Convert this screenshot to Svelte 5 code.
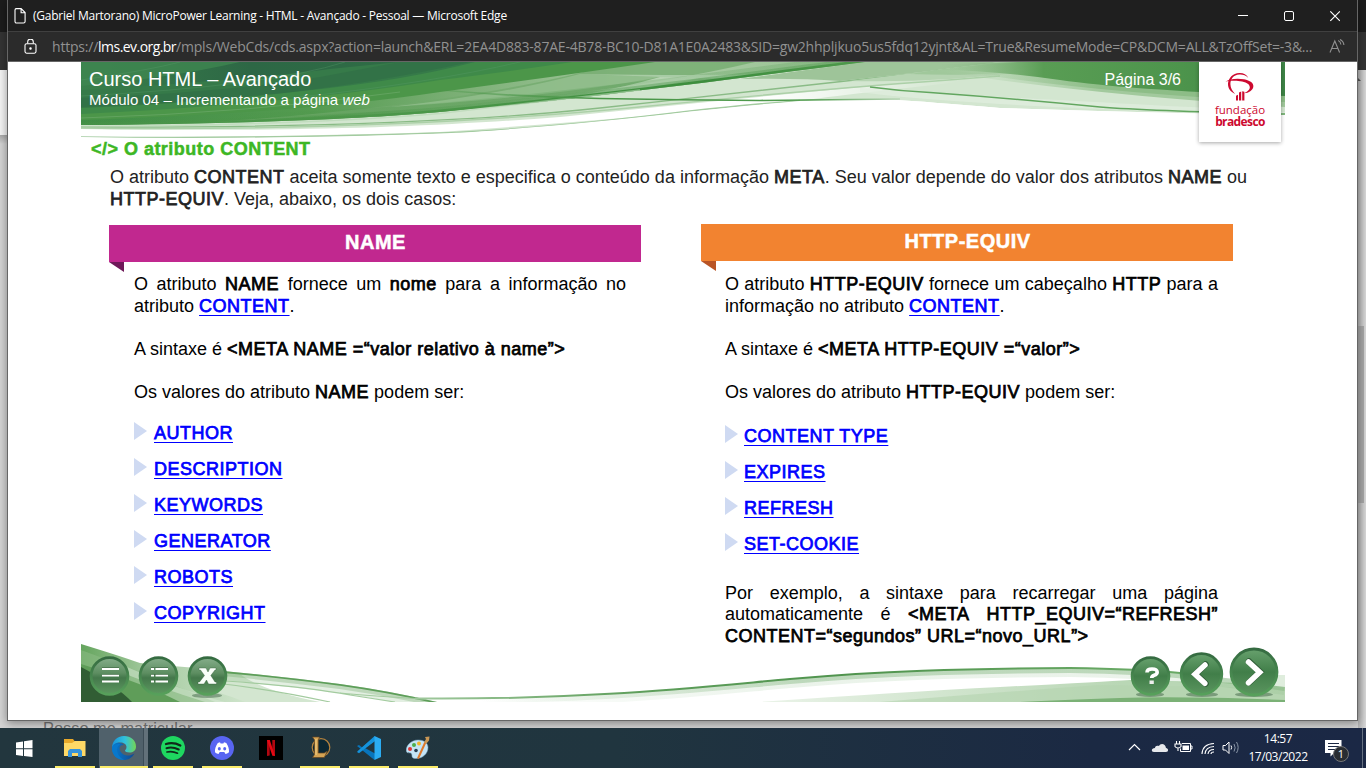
<script>
  const names = ['AUTHOR', 'DESCRIPTION', 'KEYWORDS', 'GENERATOR', 'ROBOTS', 'COPYRIGHT'];
  const equivs = ['CONTENT TYPE', 'EXPIRES', 'REFRESH', 'SET-COOKIE'];
</script>

<div class="desktop">
  <div class="behind">
    <div class="b1"></div>
    <div class="b2"></div>
    <div class="b3"></div>
    <div class="b4"></div>
    <p class="peek">Posso me matricular</p>
    <div class="track"><span class="up"></span><span class="thumb"></span></div>
  </div>

  <main class="window">
    <div class="titlebar">
      <svg class="page" width="12" height="16" viewBox="0 0 12 16"><path d="M1.5.6h5.6l4 4v8.800a1.600 1.600 0 0 1-1.600 1.600H2.500A1.400 1.400 0 0 1 1 13.600V2A1.400 1.400 0 0 1 2.400.6M7.100.8v4h4" fill="none" stroke="#fff" stroke-width="1.100" /></svg>
      <span class="wtitle">(Gabriel Martorano) MicroPower Learning - HTML - Avançado - Pessoal — Microsoft Edge</span>
      <svg class="ctl" width="104" height="12" viewBox="0 0 104 12" fill="none" stroke="#fff"><path d="M2 5.500h10" /><rect x="48.500" y="1.500" width="9" height="9" rx="1.500" /><path d="M94.300 1.300l9.600 9.600m0-9.600l-9.600 9.600" stroke-width="1.200" /></svg>
    </div>
    <div class="address">
      <svg width="14" height="16" viewBox="0 0 14 16" fill="none" stroke="#fff" stroke-width="1.1"><rect x="1" y="4.700" width="11" height="9.500" rx="1.600" /><path d="M3.700 4.500V2.900a2.800 2.800 0 0 1 5.600 0v1.600" /><circle cx="6.500" cy="9.500" r=".7" fill="#fff" /></svg>
      <span class="url">https://<b>lms.ev.org.br</b>/mpls/WebCds/cds.aspx?action=launch&amp;ERL=2EA4D883-87AE-4B78-BC10-D81A1E0A2483&amp;SID=gw2hhpljkuo5us5fdq12yjnt&amp;AL=True&amp;ResumeMode=CP&amp;DCM=ALL&amp;TzOffSet=-3&amp;...</span>
      <svg class="read" width="17" height="16" viewBox="0 0 17 16" fill="none" stroke="#919191" stroke-width="1.100"><path d="M1 13.500L5.800 2l4.800 11.500M2.700 9.500h6.200M9.200 1.500q2.400 1 2.700 4M11 .5q3.600 1.800 3.900 5.500" /></svg>
    </div>

    <section class="slide">
      <svg class="waves" width="1204" height="80" viewBox="81 62 1204 80">
        <defs>
          <linearGradient id="body" gradientUnits="userSpaceOnUse" x1="81" x2="850" y1="0" y2="0"><stop offset="0" stop-color="#3f8d46" /><stop offset=".3" stop-color="#549b50" /><stop offset=".5" stop-color="#7db077" /><stop offset=".75" stop-color="#a9cca4" /><stop offset="1" stop-color="#98c192" /></linearGradient>
          <linearGradient id="teal" gradientUnits="userSpaceOnUse" x1="81" x2="420" y1="0" y2="0"><stop offset="0" stop-color="#39804b" /><stop offset=".5" stop-color="#2d6745" /><stop offset="1" stop-color="#2f6d45" /></linearGradient>
          <linearGradient id="line1" gradientUnits="userSpaceOnUse" x1="81" x2="870" y1="0" y2="0"><stop offset="0" stop-color="#4a9448" stop-opacity=".3" /><stop offset=".45" stop-color="#4a9648" /><stop offset=".8" stop-color="#3c8d3d" /><stop offset="1" stop-color="#4f9a4c" /></linearGradient>
          <linearGradient id="line2" gradientUnits="userSpaceOnUse" x1="440" x2="900" y1="0" y2="0"><stop offset="0" stop-color="#4a9648" stop-opacity=".3" /><stop offset=".35" stop-color="#4a9648" /><stop offset=".8" stop-color="#4f9b4d" /><stop offset="1" stop-color="#b9d6b6" /></linearGradient>
          <linearGradient id="right" gradientUnits="userSpaceOnUse" x1="940" x2="1285" y1="0" y2="0"><stop offset="0" stop-color="#8fbc89" stop-opacity="0" /><stop offset=".15" stop-color="#84b67f" stop-opacity=".8" /><stop offset=".3" stop-color="#599d54" /><stop offset=".7" stop-color="#4d944c" /><stop offset="1" stop-color="#3e8546" /></linearGradient>
          <linearGradient id="band" gradientUnits="userSpaceOnUse" x1="930" x2="1100" y1="0" y2="0"><stop offset="0" stop-color="#b5d4b1" stop-opacity="0" /><stop offset="1" stop-color="#8dbd87" /></linearGradient>
          <linearGradient id="streak" gradientUnits="userSpaceOnUse" x1="760" x2="960" y1="0" y2="0"><stop offset="0" stop-color="#fff" /><stop offset="1" stop-color="#fff" stop-opacity="0" /></linearGradient>
          <clipPath id="above"><path d="M81 125C240 124 360 119 440 112C600 97 740 78 865 62H81Z" /></clipPath>
          <clipPath id="shape"><path d="M81 62H1285V115Q1150 113 1000 108Q930 102 890 99.500Q850 98 800 101Q740 106 690 111.500C600 122 500 131 440 133.500Q250 140 81 137Z" /></clipPath>
        </defs>
        <g clip-path="url(#shape)">
          <path d="M81 62H1285V115Q1150 113 1000 108Q930 102 890 99.500Q850 98 800 101Q740 106 690 111.500C600 122 500 131 440 133.500Q250 140 81 137Z" fill="#d3e6d0" />
          <path d="M81 129C300 132 430 127 560 117Q740 98 960 78V82Q840 95 790 102Q640 118 440 132Q250 138 81 137Z" fill="url(#streak)" />
          <path d="M81 137Q270 139 440 133C500 131 600 122 690 111Q740 105.500 800 100.500" fill="none" stroke="#a3cba0" stroke-width="1.500" />
          <path d="M81 127C300 128 480 121 600 108S820 84 1000 64" fill="none" stroke="#8abb86" stroke-width="1.300" />
          <path d="M81 128C300 131 500 121 650 106S880 85 1000 76" fill="none" stroke="#acd0a8" stroke-width="1.400" />
          <path d="M865 62L740 79Q800 78 840 81Q920 73 1000 62Z" fill="#9ec499" />
          <path d="M1000 62L850 81Q900 82 950 79T1100 62Z" fill="#b6d4b2" />
          <path d="M1060 62Q980 62 910 74Q960 76 1000 73Z" fill="#91bf8c" opacity=".6" />
          <path d="M860 88Q900 91 950 94T1285 112V115Q1100 110 1000 104T860 92Z" fill="#e1eedf" opacity=".7" />
        </g>

        <path d="M81 125C240 124 360 119 440 112C600 97 740 78 865 62H81Z" fill="url(#body)" />
        <path d="M200 123Q400 113 560 95Q670 82 755 62H620Q480 104 200 123Z" fill="#72aa6c" opacity=".75" />
        <path d="M390 107Q560 96 660 77L580 74Q500 95 390 107Z" fill="#9fc699" opacity=".6" />
        <path d="M500 106Q610 97 700 78L660 77Q590 97 500 106Z" fill="#c9dfc5" opacity=".75" />
        <path d="M580 74Q700 76 780 74L730 79Q660 77 660 77Z" fill="#dcebd9" opacity=".45" />
        <g clip-path="url(#above)"><path d="M81 125C240 124 360 119 440 112C600 97 740 78 865 62" fill="none" stroke="url(#line1)" stroke-width="18" opacity=".2" /><path d="M81 125C240 124 360 119 440 112C600 97 740 78 865 62" fill="none" stroke="url(#line1)" stroke-width="10" opacity=".35" /><path d="M81 125C240 124 360 119 440 112C600 97 740 78 865 62" fill="none" stroke="url(#line1)" stroke-width="5" /></g>
        <path d="M81 120Q300 113 440 92Q560 76 655 62H81Z" fill="#4c9649" />
        <path d="M81 114Q300 103 440 80Q520 70 572 62H81Z" fill="#3f8a49" />
        <path d="M81 107Q280 98 400 78Q440 71 475 62H81Z" fill="#367a49" />
        <path d="M81 90Q250 80 330 69L400 62H81Z" fill="url(#teal)" />
        <path d="M81 98Q230 92 320 77L400 62L470 62Q300 100 81 108Z" fill="#2f6c45" opacity=".55" />
        <path d="M81 62H240Q170 78 81 86Z" fill="#3e8650" opacity=".8" />
        <path d="M81 80Q150 70 180 62M81 96Q270 86 345 62M300 97Q430 83 520 62" fill="none" stroke="#5a9a69" stroke-opacity=".35" />
        <path d="M81 118Q250 113 400 92" fill="none" stroke="#83b780" stroke-opacity=".4" />
        <path d="M81 126.500C240 126 360 120 440 113.500T640 90" fill="none" stroke="#b6d6b2" stroke-width="1.500" opacity=".6" />
        <path d="M440 90Q520 97 600 98.500T760 100.500Q820 100 900 99" fill="none" stroke="url(#line2)" stroke-width="1.700" />

        <path d="M930 70Q1080 94 1285 107V97Q1120 92 1010 68Z" fill="url(#band)" opacity=".7" />
        <path d="M940 68Q1080 92 1285 102V92Q1120 84 1010 64Z" fill="url(#band)" />
        <path d="M940 64L1020 62H1285V96Q1130 90 1060 80Q990 70 940 70Z" fill="url(#right)" />
        <path d="M870 87Q900 91 930 92.500Q1020 99 1100 107Q1150 111 1285 114" fill="none" stroke="#62a65f" stroke-width="1.500" />
      </svg>
      <header class="banner">
        <div>
          <div class="course">Curso HTML – Avançado</div>
          <div class="module">Módulo 04 – Incrementando a página <i>web</i></div>
        </div>
        <div class="pageno">Página 3/6</div>
        <div class="logo">
          <svg width="30" height="28" viewBox="0 0 30 28" fill="#cd092f"><path d="M.5 8.600C4 6 12 5 19 6.300c6 1.200 10 3.700 9.300 7.600-.6 3.300-4.500 6-9 6.300 3-1.300 5.700-3.300 5.500-6.100-.3-3.500-4-5.200-9.800-5.900C9.500 7.500 4 7.600.5 8.600Z" /><path d="M23.300 5C20.500 2 17.800 1.300 14.300 1.500 8.300 2 5.300 6 5.400 11.300c.1 3.900 2 7 4.800 9.700-5-2.200-7.300-5.700-7.200-10.200C3.300 5 8-.1 14.700 0c4 0 7.100 1.800 8.600 5Z" /><path d="M11 22.800l2-1.100v5.800h-2zM14 19.500l2.200-1v9h-2.200zM17.200 18.300l2.200.5v8.700h-2.200z" /></svg>
          <span>fundação</span><strong>bradesco</strong>
        </div>
      </header>
      <h1>&lt;/&gt; O atributo CONTENT</h1>
      <p class="intro">
        <span class="line just">O atributo <b>CONTENT</b> aceita somente texto e especifica o conteúdo da informação <b>META</b>. Seu valor depende do valor dos atributos <b>NAME</b> ou</span>
        <span class="line"><b>HTTP-EQUIV</b>. Veja, abaixo, os dois casos:</span>
      </p>
      <div class="columns">
        <article class="col pink">
          <h2>NAME</h2>
          <div class="text">
            <span class="line just">O atributo <b>NAME</b> fornece um <b>nome</b> para a informação no</span>
            <span class="line">atributo <a href="#content">CONTENT</a>.</span>
            <p>A sintaxe é <b>&lt;META NAME =“valor relativo à name”&gt;</b></p>
            <p>Os valores do atributo <b>NAME</b> podem ser:</p>
            <ul>
              {#each names as n}<li><a href="#v">{n}</a></li>{/each}
            </ul>
          </div>
        </article>
        <article class="col orange">
          <h2>HTTP-EQUIV</h2>
          <div class="text">
            <span class="line just">O atributo <b>HTTP-EQUIV</b> fornece um cabeçalho <b>HTTP</b> para a</span>
            <span class="line">informação no atributo <a href="#content">CONTENT</a>.</span>
            <p>A sintaxe é <b>&lt;META HTTP-EQUIV =“valor”&gt;</b></p>
            <p>Os valores do atributo <b>HTTP-EQUIV</b> podem ser:</p>
            <ul>
              {#each equivs as n}<li><a href="#v">{n}</a></li>{/each}
            </ul>
            <div class="example">
              <span class="line just">Por exemplo, a sintaxe para recarregar uma página</span>
              <span class="line just">automaticamente é <b>&lt;META HTTP_EQUIV=“REFRESH”</b></span>
              <span class="line"><b>CONTENT=“segundos” URL=“novo_URL”&gt;</b></span>
            </div>
          </div>
        </article>
      </div>
      <svg class="nav" width="1204" height="60" viewBox="81 642 1204 60">
        <defs>
          <linearGradient id="ball" x1="0" x2="0" y1="0" y2="1"><stop offset="0" stop-color="#86ae8b" /><stop offset=".42" stop-color="#5d8e61" /><stop offset=".55" stop-color="#44784b" /><stop offset="1" stop-color="#5d9960" /></linearGradient>
          <linearGradient id="ball2" x1="0" x2="0" y1="0" y2="1"><stop offset="0" stop-color="#67a16d" /><stop offset=".5" stop-color="#417e49" /><stop offset="1" stop-color="#5b955f" /></linearGradient>
          <linearGradient id="rim" x1="0" x2="0" y1="0" y2="1"><stop offset="0" stop-color="#356b41" /><stop offset="1" stop-color="#57a05b" /></linearGradient>
          <linearGradient id="corner" gradientUnits="userSpaceOnUse" x1="81" x2="260" y1="0" y2="0"><stop offset="0" stop-color="#65a55e" /><stop offset=".4" stop-color="#a6cba1" /><stop offset="1" stop-color="#d5e8d2" /></linearGradient>
          <linearGradient id="pale" gradientUnits="userSpaceOnUse" x1="780" x2="1120" y1="0" y2="0"><stop offset="0" stop-color="#e8f2e6" /><stop offset="1" stop-color="#b9d7b5" /></linearGradient>
          <linearGradient id="thin" gradientUnits="userSpaceOnUse" x1="420" x2="1130" y1="0" y2="0"><stop offset="0" stop-color="#9fc89c" /><stop offset=".3" stop-color="#5f9f5c" /><stop offset=".6" stop-color="#4f934d" /><stop offset="1" stop-color="#69a965" /></linearGradient>
          <linearGradient id="glow" gradientUnits="userSpaceOnUse" x1="480" x2="800" y1="0" y2="0"><stop offset="0" stop-color="#78b074" stop-opacity="0" /><stop offset="1" stop-color="#78b074" /></linearGradient>
          <clipPath id="under"><path d="M415 698.500C590 700 700 687 790 679S960 668.500 1070 668Q1140 669 1200 675L1285 685V702H415Z" /></clipPath>
          <clipPath id="under2"><path d="M190 668Q260 674 340 684Q390 691 437 702H190Z" /></clipPath>
        </defs>
        <path d="M81 644Q120 656 140 663Q170 666 210 669Q240 690 262 702H81Z" fill="url(#corner)" />
        <path d="M81 650Q150 675 215 702H81Z" fill="#8abb84" opacity=".6" />
        <path d="M190 668Q215 670 240 674Q260 690 320 702H245Q215 690 190 686Z" fill="#d3e6d0" />
        <g clip-path="url(#under2)"><path d="M190 668Q260 674 340 684Q390 691 437 702" fill="none" stroke="#8fbe8b" stroke-width="18" opacity=".25" /><path d="M190 668Q260 674 340 684Q390 691 437 702" fill="none" stroke="#78b074" stroke-width="10" opacity=".35" /><path d="M220 671Q270 675 340 684Q390 691 437 702" fill="none" stroke="#5d9e59" stroke-width="3.500" /></g>
        <path d="M225 681Q300 686 350 695L395 702M215 683Q270 689 330 702M340 693Q370 696 425 699" fill="none" stroke="#a3cb9f" stroke-width="1.200" />
        <path d="M81 664Q145 684 180 702H81Z" fill="#5f9d59" />
        <path d="M81 667Q117 686 132 702H81Z" fill="#315d34" />
        <path d="M120 664Q180 690 225 702H205Q160 688 110 668Z" fill="#dcebd9" opacity=".5" />
        <g clip-path="url(#under)">
          <path d="M760 702Q900 692 1000 687T1130 680L1285 684V702Z" fill="url(#pale)" />
          <path d="M880 702Q1000 692 1100 685L1285 688V702Z" fill="#b4d4af" opacity=".6" />
          <g fill="none"><path d="M415 698C590 700 700 687 790 679S960 668.500 1070 668Q1140 669 1200 675L1285 686" stroke="url(#glow)" stroke-width="18" opacity=".15" /><path d="M415 698C590 700 700 687 790 679C880 671 960 668.500 1070 668Q1140 669 1200 675L1285 686" stroke="url(#glow)" stroke-width="10" opacity=".4" /></g>
        </g>
        <path d="M415 698.500C590 700 700 687 790 679S960 668.500 1070 668Q1140 669 1180 673" fill="none" stroke="url(#thin)" stroke-width="2" />
        <path d="M1020 702Q1060 700 1120 698T1285 700V702Z" fill="#7bb176" />
        <path d="M1240 676q20-1 45-1v12l-45-5z" fill="#dfeddd" />

        <g fill="#21452a" opacity=".4"><ellipse cx="207" cy="695.500" rx="15" ry="2.500" /><ellipse cx="1150" cy="694.500" rx="14" ry="2.500" /><ellipse cx="1202" cy="694.500" rx="16" ry="2.500" /><ellipse cx="1254" cy="694.500" rx="19" ry="2.500" /></g>
        <g fill="url(#ball)" stroke="url(#rim)" stroke-width="2.800"><circle cx="109.500" cy="676" r="18.400" /><circle cx="158.500" cy="676" r="18.400" /><circle cx="207.500" cy="676" r="18.400" /></g>
        <g fill="url(#ball2)" stroke="url(#rim)" stroke-width="2.800"><circle cx="1150.500" cy="676" r="18.400" /><circle cx="1201.500" cy="674" r="20.300" /><circle cx="1254" cy="672" r="23" /></g>
        <path d="M102 667.700h17m-17 6.800h17m-17 5.500h17M151 667.700h17m-17 6.800h17m-17 5.500h17" stroke="#345a38" stroke-width="1" opacity=".6" />
        <path d="M102 669h17M102 675.700h17M102 681.500h17M151 669h3m1.500 0H168M151 675.700h3m1.500 0H168M151 681.500h3m1.500 0H168" stroke="#fff" stroke-width="1.800" />
        <path d="M199 668h7l2 4 2-4h6v2h-1l-4.200 5.500L215 682h1.500v2h-8l-2-4-2.500 4h-6v-2h1.500l5-6.500-4-5.500H199z" fill="#f9fff9" stroke="#355a3a" stroke-width=".4" />
        <path d="M1147 672.500q0-3.500 5-3.500t5.200 3q0 2.300-3 3.300-2.500.8-2.500 2.700" fill="none" stroke="#fff" stroke-width="3.600" /><rect x="1149.500" y="680.500" width="4.300" height="3.500" fill="#eee" />
        <g fill="none" stroke-linecap="round" stroke-linejoin="miter"><path d="M1205.500 664.500l-10 9.500 10 9.500M1249 661.500l11 10.500-11 10.500" stroke="#315d38" stroke-width="6.500" /><path d="M1205 665l-10 9.300 9.800 9M1248.500 662l11.200 10.300-11.200 10.500" stroke="#fff" stroke-width="5.500" /></g>
      </svg>
    </section>
  </main>

  <footer class="taskbar">
    <div class="task start"><svg width="17" height="17" viewBox="0 0 17 17" fill="#fff"><path d="M0 2.500l7-1v6.700H0zM8 1.300L16.500 0v8.200H8zM0 9.200h7V16l-7-1zM8 9.200h8.500V17L8 16z" /></svg></div>
    <div class="task open"><svg width="24" height="24" viewBox="0 0 24 24"><path d="M1 3h9l1.500 2H22v15H1z" fill="#e9a92a" /><path d="M1 7h8l3-2h10.500v15H1z" fill="#ffd966" /><path d="M5 21v-6l2-2h10l2 2v6h-4v-4H9v4z" fill="#3794da" /></svg></div>
    <div class="task open active"><svg width="26" height="26" viewBox="0 0 26 26">
      <defs><linearGradient id="eg" x1="0" x2="1"><stop offset="0" stop-color="#1992db" /><stop offset=".55" stop-color="#31c2dc" /><stop offset="1" stop-color="#74d554" /></linearGradient><linearGradient id="eb" x1="0" x2="1"><stop offset="0" stop-color="#087bcf" /><stop offset="1" stop-color="#114b92" /></linearGradient></defs>
      <path d="M1 13C1 6 6 1 13 1s12 4.500 12 10.500c0 4-3 6-6.500 6-3 0-4.500-1-4.500-2 0-.8 1.500-1 1.500-3.500C15.500 8 9 6 4.500 9 2.500 10 1.500 11.500 1 13Z" fill="url(#eg)" /><path d="M1 13C1.500 8 9 6 13 10c-4-.5-5.500 3-3.500 6.500 3 5 9 5 14 2C21 23 17 25 13 25 6 25 1 20 1 13Z" fill="url(#eb)" /><path d="M9.500 9.500C5 11 4.500 18 10 23c1 .8 2 1.500 3 2C6 25 1 20 1 13c1-3 5-5 8.500-3.500" fill="#0878cc" /></svg></div>
    <div class="task open"><svg width="24" height="24" viewBox="0 0 24 24"><circle cx="12" cy="12" r="12" fill="#1ed760" /><g fill="none" stroke="#10291a" stroke-linecap="round"><path d="M5 8c5-1.500 10-.8 14.300 1.500" stroke-width="2.300" /><path d="M5.500 12.200c4.500-1.300 8.300-.6 12.200 1.300" stroke-width="2" /><path d="M6 16c4-1 7-.5 10.500 1.200" stroke-width="1.700" /></g></svg></div>
    <div class="task open"><svg width="24" height="24" viewBox="0 0 24 24"><circle cx="12" cy="12" r="12" fill="#5865f2" /><path d="M7.800 7l2.200-.7.600 1.200h2.800L14 6.300l2.300.7c2 3 2.900 5.700 2.700 9.200-1.500 1.100-2.500 1.500-3.500 1.800l-1.200-2H9.700l-1.200 2c-1-.3-2.200-.8-3.500-1.800C4.700 12.700 5.800 10 7.800 7Z" fill="#fff" /><ellipse cx="9.300" cy="12.700" rx="1.500" ry="1.700" fill="#5865f2" /><ellipse cx="14.700" cy="12.700" rx="1.500" ry="1.700" fill="#5865f2" /></svg></div>
    <div class="task"><svg width="24" height="24" viewBox="0 0 24 24"><path fill="#000" d="M0 0h24v24H0z" /><path d="M8 4h2.700v15.500L8 20zM13.300 4H16v16l-2.700-.5z" fill="#b20710" /><path d="M8 4h2.800L16 20l-2.700-.4z" fill="#e50914" /></svg></div>
    <div class="task open"><svg width="24" height="24" viewBox="0 0 24 24"><circle cx="13" cy="11.500" r="8.800" fill="#0b2733" stroke="#b5833e" stroke-width="1.200" /><path d="M4.500 1h7l-1.200 3v13h6l3-2-3 6.500H4.500l2-3V4z" fill="#d5a454" stroke="#61431f" stroke-width=".7" /><path d="M8 3v16" stroke="#f3d187" /></svg></div>
    <div class="task open"><svg width="24" height="24" viewBox="0 0 24 24"><path d="M17.500 0L5.200 11.600 2 9 0 10.100 17.500 24l1.500-6L8 12l10-7z" fill="#0875bc" /><path d="M0 16l2 1.200L18 5V0L1 14.800z" fill="#1593dc" /><path d="M17.500 0L24 3v18l-6.500 3z" fill="#2bacf2" /></svg></div>
    <div class="task open"><svg width="24" height="24" viewBox="0 0 24 24"><path d="M12 4C5 4-.5 10 .3 15c.5 3 3.500 1 5 2.500S4.500 22 9 22.500C16 23 22 18 22 11.500 22 7 18 4 12 4Z" fill="#c4e4f5" stroke="#7ca9c5" stroke-width=".5" /><circle cx="4" cy="13" r="2" fill="#dd3838" /><circle cx="8" cy="9" r="2" fill="#4cae4d" /><circle cx="13" cy="7.500" r="2" fill="#f3b329" /><circle cx="10" cy="14.500" r="1.800" fill="#263e52" /><path d="M12 22.500L19.500 6" stroke="#df792a" stroke-width="2" /><path d="M18 6.500L20 3l-1-2 4.500-.5-.5 4-2.500 3z" fill="#c99755" /></svg></div>
    <div class="tray">
      <svg width="112" height="18" viewBox="0 0 112 18" fill="none" stroke="#fff"><path d="M1 11l5.500-5.500L12 11" stroke-width="1.200" /><path d="M26 13h12c3 0 2.500-4 0-4-.5-5-6-5-7-2-3-1-4 1-4 2-4 0-4 4-1 4Z" fill="#e6e8eb" stroke="none" /><path d="M54 4.500h8.500v8h-10v-3M62.500 7h1.500v3h-1.500" /><path d="M48.500 2v3M51.500 2v3M47 5h6v2.500q-1 1.500-3 1.500t-3-1.500zM50 9v3" stroke-width="1.100" /><path d="M54.500 6.500h6.500v4.500h-6.500z" fill="#fff" stroke="none" /><g stroke-width="1.100"><path d="M74 15Q74.500 5 86 4.500M77 15Q77.500 8 86 7.500M80 15q.5-4.500 6-4.500M83 15q0-2 3-2" /></g><path d="M95 6.500h2.500L101 3v11.500L97.500 11H95z" /><path d="M103 6.500q1.300 2 0 4" /><path d="M106 5q2.300 3.800 0 7.500M108.500 3q3.300 5.500 0 11" stroke="#8a96a7" /></svg>
      <div class="clock"><span>14:57</span><span>17/03/2022</span></div>
      <div class="notes"><svg width="17" height="17" viewBox="0 0 17 17"><path d="M0 0h16.500v13H9l-3.500 3.500V13H0z" fill="#fff" /><path d="M3 3.500h11M3 6.500h11M3 9.500h7" stroke="#1c2843" /></svg><em>1</em></div>
      <i class="peekline"></i>
    </div>
  </footer>
</div>

<style>
  :global(body) { margin: 0; overflow: hidden; background: #fff; }
  .desktop { position: relative; width: 1366px; height: 769px; overflow: hidden; font-family: "Liberation Sans", Arial, sans-serif; }
  .behind { height: 728px; background: #d4d4d4; display: flex; flex-direction: column; }
  .b1 { height: 32px; background: #1c1c1c; }
  .b2 { height: 38px; background: #343434; }
  .b3 { height: 65px; background: linear-gradient(90deg, #f5f5f5 0 8px, #d4d4d4 8px); }
  .b4 { flex: 1; background: linear-gradient(#aaa, #d4d4d4 9px); }
  .peek { height: 9px; margin: 0 0 0 43px; font-size: 16.400px; line-height: 19px; color: #737373; overflow: hidden; }
  .track { position: absolute; right: 0; top: 70px; width: 8px; height: 658px; background: linear-gradient(90deg, #b4b4b4, #d8d8d8); }
  .thumb { position: absolute; left: 0; top: 256px; width: 6px; height: 177px; background: #a6a6a6; }
  .up { position: absolute; left: 0; top: 8px; border-left: 3px solid #555; border-top: 3px solid transparent; }
  .window { position: absolute; left: 7px; top: 0; width: 1349px; height: 720px; background: #fff; border: 1px solid #666; border-top: 0; box-shadow: 0 2px 9px rgba(0, 0, 0, .4); }
  .titlebar { height: 31px; box-sizing: border-box; background: #1f1f1f; display: flex; align-items: center; padding: 0 17px 0 6px; color: #fff; }
  .wtitle { font: 12px/16px "Open Sans", sans-serif; margin-left: 7px; white-space: nowrap; letter-spacing: -.24px; }
  .ctl { margin-left: auto; }
  .address { height: 31px; box-sizing: border-box; background: #2b2b2b; border-top: 1px solid #404040; border-bottom: 1px solid #666; display: flex; align-items: center; padding: 0 11px 0 16px; color: #919191; }
  .url { font: 14px/18px "Open Sans", sans-serif; margin-left: 14px; width: 1262px; white-space: nowrap; letter-spacing: -.205px; }
  .url b { font-weight: 400; color: #fff; letter-spacing: -.55px; }
  .read { margin-left: auto; flex: none; }
  .slide { position: relative; width: 1204px; height: 640px; margin-left: 73px; display: flex; flex-direction: column; }
  .waves { position: absolute; left: 0; top: 0; }
  .banner { position: relative; height: 76px; display: flex; color: #fff; padding-left: 8px; }
  .course { font-size: 20px; line-height: 24px; padding-top: 5px; }
  .module { font-size: 15px; line-height: 18px; letter-spacing: .02px; }
  .pageno { margin-left: auto; font-size: 16px; line-height: 20px; padding-top: 8px; margin-right: 18px; }
  .logo { width: 82px; height: 80px; margin-right: 4px; background: #fff; box-shadow: 0 1px 4px rgba(0, 0, 0, .35); clip-path: inset(0 -4px -6px -4px); color: #cd092f; display: flex; flex-direction: column; align-items: center; font-family: "Open Sans", sans-serif; font-size: 11.500px; line-height: 12px; }
  .logo svg { margin: 11px 0 3px; flex: none; }
  .logo strong { font-size: 12px; letter-spacing: -.6px; }
  h1 { margin: 0 0 0 10px; font-size: 18px; line-height: 22px; letter-spacing: .48px; -webkit-text-stroke: .5px currentColor; color: #3db724; }
  .intro { margin: 6px 38px 0 29px; height: 58px; font-size: 18px; line-height: 22px; color: #222; }
  .line { display: block; white-space: nowrap; }
  .just { text-align: justify; text-align-last: justify; }
  .intro b, .text b, .text a { font-weight: 400; letter-spacing: .5px; -webkit-text-stroke: .75px currentColor; }
  .columns { position: relative; z-index: 1; display: flex; gap: 60px; padding-left: 28px; height: 418px; flex: none; }
  .col { width: 532px; }
  .pink { padding-top: 1px; --c: #c1288f; --fold: #6e1959; }
  .orange { --c: #f28330; --fold: #b95425; }
  h2 { position: relative; margin: 0; height: 37px; background: var(--c); color: #fff; font-size: 20px; line-height: 34px; letter-spacing: .5px; text-indent: 1px; -webkit-text-stroke: .5px currentColor; text-align: center; }
  h2::after { content: ""; position: absolute; left: 0; top: 37px; width: 15px; height: 10px; background: var(--fold); clip-path: polygon(0 0, 100% 0, 100% 100%); }
  .text { margin: 12px 15px 0 25px; font-size: 18px; line-height: 21.600px; color: #000; }
  .orange .text { margin: 13px 15px 0 24px; }
  .text p { margin: 21.600px 0 0; }
  .text a { color: #00f; text-decoration: underline; text-decoration-thickness: 1px; text-underline-offset: 3px; text-decoration-skip-ink: none; }
  ul { list-style: none; margin: 19px 0 0; padding: 0; }
  .orange ul { margin-top: 22px; }
  li { display: flex; height: 36px; align-items: flex-start; gap: 7px; }
  .orange li { gap: 6px; }
  li::before { content: ""; margin-top: -1px; border-left: 13px solid #cfdaf2; border-top: 9.500px solid transparent; border-bottom: 9.500px solid transparent; }
  .example { margin-top: 13px; }
  .nav { margin-top: auto; }
  .taskbar { position: relative; height: 40px; display: flex; background: linear-gradient(90deg, #22363e, #20353f 45%, #1b2943 80%, #1b2845); color: #fff; }
  .task { width: 49px; display: flex; align-items: center; justify-content: center; position: relative; box-sizing: border-box; }
  .start { width: 50px; padding-right: 2px; }
  .open::after { content: ""; position: absolute; left: 5px; right: 4px; bottom: 0; height: 2px; background: #fbed6a; }
  .active { background: linear-gradient(90deg, #50616b 44px, #3c4c56 44px, #3c4c56 45px, #62717a 45px); }
  .active::after { left: 1px; right: 0; }
  .tray { margin-left: auto; display: flex; align-items: center; width: 238px; }
  .clock { width: 76px; display: flex; flex-direction: column; align-items: center; font: 12px/18px "Open Sans", sans-serif; letter-spacing: -.45px; }
  .tray > svg { flex: none; }
  .notes { position: relative; margin-left: 9px; height: 17px; }
  .notes em { position: absolute; left: 8px; top: 6px; width: 14px; height: 14px; border: 1px solid #777; border-radius: 50%; background: #292d32; font: 11px/14px "Open Sans", sans-serif; text-align: center; }
  .peekline { width: 1px; height: 40px; background: #657080; margin-left: 20px; }
</style>
